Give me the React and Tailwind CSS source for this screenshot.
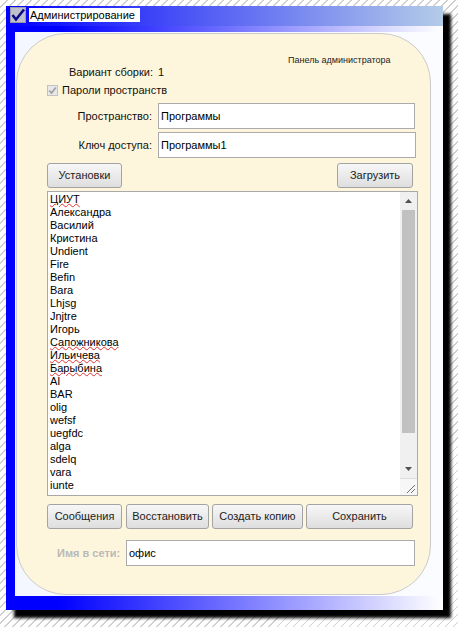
const names = [
  { t: 'ЦИУТ', bad: true },
  { t: 'Александра' },
  { t: 'Василий' },
  { t: 'Кристина' },
  { t: 'Undient' },
  { t: 'Fire' },
  { t: 'Befin' },
  { t: 'Bara' },
  { t: 'Lhjsg' },
  { t: 'Jnjtre' },
  { t: 'Игорь' },
  { t: 'Сапожникова', bad: true },
  { t: 'Ильичева', bad: true },
  { t: 'Барыбина', bad: true },
  { t: 'AI' },
  { t: 'BAR' },
  { t: 'olig' },
  { t: 'wefsf' },
  { t: 'uegfdc' },
  { t: 'alga' },
  { t: 'sdelq' },
  { t: 'vara' },
  { t: 'iunte' },
];

function Btn({ children, className = '' }) {
  return (
    <button
      className={
        'h-[25px] border border-[#a3a3a3] rounded-[3px] bg-[linear-gradient(#f7f7f7,#dedede)] text-[11px] text-[#222] ' +
        className
      }
    >
      {children}
    </button>
  );
}

function Field({ value, className = '' }) {
  return (
    <div
      className={
        'h-[26px] border border-[#ababab] bg-white flex items-center pl-[2px] text-[11px] text-black ' +
        className
      }
    >
      {value}
    </div>
  );
}

export default function App() {
  return (
    <div
      className="w-[458px] h-[627px] pl-[6px] pt-[6px] bg-[repeating-linear-gradient(135deg,#ffffff_0px,#ffffff_4.6px,#cfcfcf_4.6px,#cfcfcf_5.66px)]"
      style={{ fontFamily: '"Liberation Sans", Arial, sans-serif' }}
    >
      <div className="w-[437px] h-[604px] flex flex-col shadow-[8px_8px_3px_#000]">
        {/* title */}
        <div className="h-[20px] flex items-start pt-px pl-[4px] bg-[linear-gradient(to_right,#0000ff,#b4cce8)]">
          <svg width="16" height="16" viewBox="0 0 16 16">
            <rect x="0" y="0" width="16" height="16" fill="#bfc0cc" />
            <rect x="0.5" y="0.5" width="15" height="15" fill="none" stroke="#9a9aa8" />
            <polyline points="2.5,8 6,12.5 14,2.5" fill="none" stroke="#0a0a8a" strokeWidth="2.6" />
          </svg>
          <div className="ml-[3px] mt-px h-[14px] w-[111px] bg-white text-[11px] leading-[14px] text-black pl-px">
            Администрирование
          </div>
        </div>

        <div className="flex-1 pl-[9px] pt-[6px] pb-[14px] bg-[linear-gradient(to_right,#0000ff_12%,#ffffff_100%)]">
          <div className="h-full pl-px pt-px bg-[linear-gradient(to_right,#f4f7ff,#fafcff)]">
            <div className="w-[415px] h-[562px] rounded-[50px] border border-[#cacaca] bg-[#fef6dc] pl-[30px] text-[11px] text-[#111]">
              <div className="mt-[20px] h-[12px] pl-[241px] text-[9px] leading-[12px] text-[#222]">
                Панель администратора
              </div>
              <div className="h-[12px] flex items-center leading-[12px]">
                <div className="w-[106px] text-right">Вариант сборки:</div>
                <div className="ml-[5px]">1</div>
              </div>
              <div className="mt-[6px] h-[12px] flex items-center">
                <svg width="11" height="11" viewBox="0 0 11 11">
                  <rect x="0.5" y="0.5" width="10" height="10" fill="#e9e9e9" stroke="#c2c2c2" />
                  <polyline points="2.2,5.5 4.5,8 8.8,2.5" fill="none" stroke="#a2a2a2" strokeWidth="1.8" />
                </svg>
                <div className="ml-[4px]">Пароли пространств</div>
              </div>
              <div className="mt-[7px] flex items-center">
                <div className="w-[105px] text-right">Пространство:</div>
                <Field value="Программы" className="ml-[6px] w-[257px]" />
              </div>
              <div className="mt-[3px] flex items-center">
                <div className="w-[105px] text-right">Ключ доступа:</div>
                <Field value="Программы1" className="ml-[6px] w-[258px]" />
              </div>
              <div className="mt-[5px] flex w-[366px] justify-between">
                <Btn className="w-[75px]">Установки</Btn>
                <Btn className="w-[76px]">Загрузить</Btn>
              </div>
              <div className="mt-[3px] w-[371px] h-[305px] border border-[#a9a9a9] bg-white flex">
                <div className="flex-1 pl-[2px] pt-[1px] text-[11px] leading-[13px] text-black overflow-hidden">
                  {names.map((n, i) => (
                    <div key={i}>
                      <span className={n.bad ? 'underline decoration-wavy decoration-[#e03030] decoration-1 underline-offset-[0px]' : ''}>
                        {n.t}
                      </span>
                    </div>
                  ))}
                </div>
                <div className="w-[17px] flex flex-col bg-[#f0f0f0]">
                  <div className="h-[18px] flex items-center justify-center">
                    <svg width="7" height="4" viewBox="0 0 7 4">
                      <polygon points="0,4 3.5,0 7,4" fill="#505050" />
                    </svg>
                  </div>
                  <div className="mx-[2px] h-[223px] bg-[#c1c1c1]" />
                  <div className="flex-1" />
                  <div className="h-[18px] flex items-center justify-center">
                    <svg width="7" height="4" viewBox="0 0 7 4">
                      <polygon points="0,0 7,0 3.5,4" fill="#505050" />
                    </svg>
                  </div>
                  <div className="h-[17px] border-t border-[#dcdcdc] bg-[#f7f7f7] flex items-end justify-end pr-[2px] pb-[2px]">
                    <svg width="10" height="10" viewBox="0 0 10 10">
                      <line x1="2" y1="10" x2="10" y2="2" stroke="#707070" strokeWidth="1" />
                      <line x1="6" y1="10" x2="10" y2="6" stroke="#707070" strokeWidth="1" />
                    </svg>
                  </div>
                </div>
              </div>
              <div className="mt-[8px] flex">
                <Btn className="w-[75px]">Сообщения</Btn>
                <Btn className="ml-[4px] w-[83px]">Восстановить</Btn>
                <Btn className="ml-[3px] w-[91px]">Создать копию</Btn>
                <Btn className="ml-[3px] w-[107px]">Сохранить</Btn>
              </div>
              <div className="mt-[11px] flex items-center">
                <div className="ml-[10px] w-[69px] font-bold text-[#b9b9b9]">Имя в сети:</div>
                <Field value="офис" className="w-[289px]" />
              </div>
            </div>
          </div>
        </div>
      </div>
    </div>
  );
}
